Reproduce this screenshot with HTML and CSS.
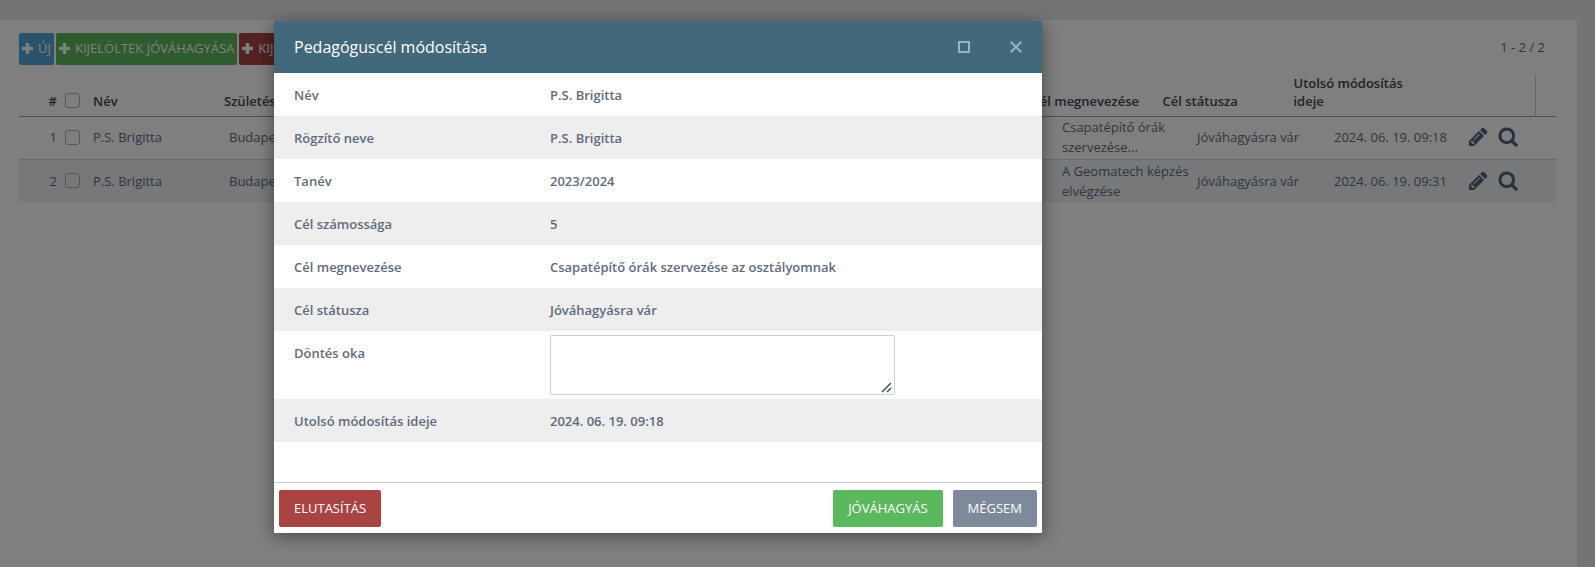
FILE: index.html
```
<!DOCTYPE html>
<html lang="hu">
<head>
<meta charset="utf-8">
<title>Pedagóguscél módosítása</title>
<link rel="stylesheet" href="styles.css">
</head>
<body>
<svg class="sprite" aria-hidden="true">
  <symbol id="plus" viewBox="0 0 11 11"><path d="M4.500 0h2q.7 0 .7.700V3.800h3.100q.7 0 .7.700v2q0 .7-.7.700H7.200v3.100q0 .7-.7.700h-2q-.7 0-.7-.7V7.200H.7Q0 7.200 0 6.500v-2q0-.7.700-.7h3.100V.7q0-.7.700-.7z"/></symbol>
  <symbol id="pencil" viewBox="0 0 20 20"><path fill-rule="evenodd" d="M13.600 1.400c.9-.9 1.900-.9 2.800 0l2.300 2.300c.9.900.9 1.900 0 2.800l-1.600 1.600-5.100-5.100zM11 4l5.100 5.100L6 19H1v-5zM3 14.600v1.100h1.400V17h1.200l1-1L4 13.500zM5.500 12.400l.7.700 5.700-5.700-.7-.7z"/></symbol>
  <symbol id="search" viewBox="0 0 21 21"><circle cx="9.200" cy="9.200" r="7.200" fill="none" stroke="currentColor" stroke-width="3.200"/><path d="M14.500 14.500l4.500 4.500" stroke="currentColor" stroke-width="3.600" stroke-linecap="round"/></symbol>
</svg>
<main class="panel">
  <div class="toolbar">
    <button class="tool blue"><svg class="plus"><use href="#plus"/></svg>ÚJ</button>
    <button class="tool green"><svg class="plus"><use href="#plus"/></svg>KIJELÖLTEK JÓVÁHAGYÁSA</button>
    <button class="tool red"><svg class="plus"><use href="#plus"/></svg>KIJELÖLTEK ELUTASÍTÁSA</button>
    <span class="pager">1 - 2 / 2</span>
  </div>
  <div class="grid-head">
    <table class="grid">
      <colgroup><col class="w-num"><col class="w-check"><col class="w-name-head"><col><col class="w-goal-head"><col class="w-status-head"><col class="w-date-head"></colgroup>
      <thead><tr>
        <th class="num">#</th>
        <th class="check"><input type="checkbox" aria-label="Összes kijelölése"></th>
        <th>Név</th><th>Születési hely</th><th>Cél megnevezése</th><th>Cél státusza</th>
        <th class="date-head"><span>Utolsó módosítás ideje</span></th>
      </tr></thead>
    </table>
  </div>
  <table class="grid grid-body">
    <colgroup><col class="w-num"><col class="w-check"><col class="w-name"><col><col class="w-goal"><col class="w-status"><col class="w-date"><col class="w-actions"></colgroup>
    <tbody>
      <tr>
        <td class="num">1</td>
        <td class="check"><input type="checkbox" aria-label="1. sor kijelölése"></td>
        <td>P.S. Brigitta</td><td>Budapest</td><td>Csapatépítő órák szervezése...</td><td>Jóváhagyásra vár</td><td>2024. 06. 19. 09:18</td>
        <td><div class="actions"><button aria-label="Módosítás"><svg><use href="#pencil"/></svg></button><button aria-label="Megtekintés"><svg><use href="#search"/></svg></button></div></td>
      </tr>
      <tr>
        <td class="num">2</td>
        <td class="check"><input type="checkbox" aria-label="2. sor kijelölése"></td>
        <td>P.S. Brigitta</td><td>Budapest</td><td>A Geomatech képzés elvégzése</td><td>Jóváhagyásra vár</td><td>2024. 06. 19. 09:31</td>
        <td><div class="actions"><button aria-label="Módosítás"><svg><use href="#pencil"/></svg></button><button aria-label="Megtekintés"><svg><use href="#search"/></svg></button></div></td>
      </tr>
    </tbody>
  </table>
</main>
<div class="overlay">
  <section class="dialog" role="dialog" aria-modal="true" aria-labelledby="dialog-title">
    <header class="dialog-head">
      <h1 id="dialog-title">Pedagóguscél módosítása</h1>
      <button aria-label="Teljes méret"><svg viewBox="0 0 12 12"><path d="M1 1h10v10H1z"/></svg></button>
      <button aria-label="Bezárás"><svg viewBox="0 0 12 12"><path d="M.7.7l10.600 10.600M11.300.7L.7 11.300"/></svg></button>
    </header>
    <dl class="fields">
      <div class="field"><dt>Név</dt><dd>P.S. Brigitta</dd></div>
      <div class="field"><dt>Rögzítő neve</dt><dd>P.S. Brigitta</dd></div>
      <div class="field"><dt>Tanév</dt><dd>2023/2024</dd></div>
      <div class="field"><dt>Cél számossága</dt><dd>5</dd></div>
      <div class="field"><dt>Cél megnevezése</dt><dd>Csapatépítő órák szervezése az osztályomnak</dd></div>
      <div class="field"><dt>Cél státusza</dt><dd>Jóváhagyásra vár</dd></div>
      <div class="field"><dt><label for="reason">Döntés oka</label></dt><dd class="control"><textarea id="reason"></textarea></dd></div>
      <div class="field"><dt>Utolsó módosítás ideje</dt><dd>2024. 06. 19. 09:18</dd></div>
    </dl>
    <footer class="dialog-foot">
      <button class="action red">ELUTASÍTÁS</button>
      <button class="action green push">JÓVÁHAGYÁS</button>
      <button class="action gray">MÉGSEM</button>
    </footer>
  </section>
</div>
</body>
</html>
```
FILE: styles.css
```
* { box-sizing: border-box; }
body {
  margin: 0;
  min-height: 100vh;
  padding: 20px 18px 0 0;
  display: flex;
  flex-direction: column;
  background: #e6e8ed;
  color: #5f6b7c;
  font: 13px/20px "Open Sans", sans-serif;
}
button { border: 0; padding: 0; background: none; color: inherit; font: inherit; }
svg { display: block; fill: currentColor; }
.sprite { position: absolute; width: 0; height: 0; }

.panel { flex: 1; padding: 13px 21px 0 19px; background: #fff; }
.toolbar { display: flex; gap: 2px; }
.tool {
  display: flex;
  align-items: center;
  gap: 5px;
  height: 32px;
  padding: 0 3px 2px;
  border-radius: 2px;
  color: #fff;
}
.plus { width: 11px; height: 11px; }
.blue { background: #54a4d4; }
.green { background: #5cb85c; }
.red { background: #a94442; }
.gray { background: #7e8a9b; }
.pager { margin: 4px 11px 0 auto; }

.grid { width: 100%; table-layout: fixed; border-collapse: collapse; }
.grid th, .grid td { padding: 0 4px; text-align: left; }
.grid .num { text-align: right; }
.grid-head { margin-top: 9px; padding-right: 20px; border-bottom: 1px solid #a0a0a0; }
.grid th {
  height: 42px;
  padding-bottom: 6px;
  vertical-align: bottom;
  color: #3e4651;
  font-weight: 600;
  line-height: 18px;
}
.grid .date-head { border-right: 1px solid #ccc; }
.date-head span { display: block; width: 120px; }
.grid td { height: 42px; line-height: 20px; }
.grid-body tr:first-child td { padding-bottom: 2px; }
.grid-body tr + tr { border-top: 1px solid #d2d5d9; background: #eef1f5; }
.w-num { width: 42px; }
.w-check { width: 28px; }
.w-name-head { width: 131px; }
.w-goal-head { width: 131px; }
.w-status-head { width: 131px; }
.w-date-head { width: 246px; }
.w-name { width: 136px; }
.w-goal { width: 135px; }
.w-status { width: 137px; }
.w-date { width: 134px; }
.w-actions { width: 92px; }
input[type="checkbox"] {
  appearance: none;
  display: block;
  width: 15px;
  height: 15px;
  margin: 0;
  border: 1px solid #a9afbd;
  border-radius: 3px;
}
th input[type="checkbox"] { margin-bottom: 2px; }
.actions { display: flex; gap: 10px; color: #55637a; }
.actions svg { width: 20px; height: 20px; }

.overlay {
  position: absolute;
  inset: 0;
  display: grid;
  grid-template-columns: 274fr 768fr 553fr;
  align-items: start;
  padding-top: 21px;
  background: rgba(0, 0, 0, .5);
}
.dialog { grid-column: 2; background: #fff; box-shadow: 0 3px 16px rgba(0, 0, 0, .45); }
.dialog-head {
  display: flex;
  align-items: center;
  gap: 40px;
  height: 52px;
  padding: 0 20px;
  background: #42697b;
  color: #fff;
}
.dialog-head h1 { flex: 1; margin: 0; font-size: 16px; font-weight: 400; }
.dialog-head svg { width: 12px; height: 12px; fill: none; stroke: #9cb2bc; stroke-width: 2; }
.fields { margin: 0; padding-bottom: 40px; font-weight: 600; }
.field { display: grid; grid-template-columns: 1fr 2fr; min-height: 43px; }
.field:nth-child(even) { background: #eee; }
.field dt, .field dd { margin: 0; padding: 12px 20px 11px; }
.field .control { padding-top: 4px; padding-bottom: 4px; }
textarea {
  display: block;
  width: 73%;
  height: 60px;
  border: 1px solid #c3d0e0;
  border-radius: 2px;
  font: inherit;
}
textarea::-webkit-resizer {
  background: url("data:image/svg+xml,%3Csvg xmlns='http://www.w3.org/2000/svg' width='15' height='15'%3E%3Cpath d='M3 13l9-9M8 13l4-4' stroke='%23555' stroke-width='1.600'/%3E%3C/svg%3E") no-repeat right bottom;
}
.dialog-foot {
  display: flex;
  gap: 10px;
  padding: 7px 5px 6px;
  border-top: 1px solid #ccc;
}
.action { height: 37px; padding: 0 15px 2px; border-radius: 2px; color: #fff; }
.push { margin-left: auto; }
```
